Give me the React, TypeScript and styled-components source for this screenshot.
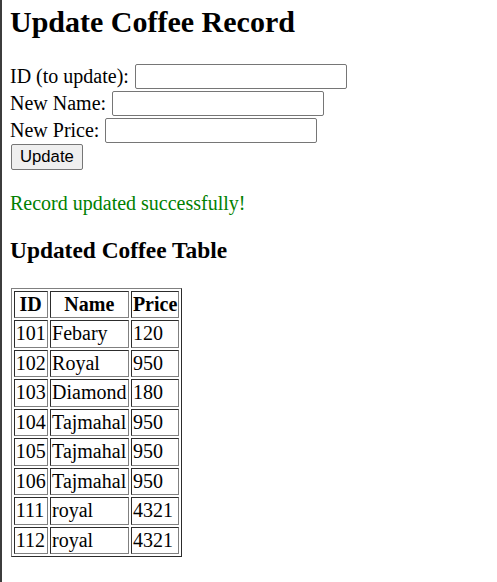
import React from "react";
import styled, { createGlobalStyle } from "styled-components";

const GlobalStyle = createGlobalStyle`
  html {
    background: #fff;
  }
  body {
    margin: 0;
    font-family: "Liberation Serif", "Times New Roman", serif;
    font-size: 20px;
    color: #000;
    border-left: 2px solid #3c3c3c;
    min-height: 582px;
    box-sizing: border-box;
  }
`;

const Page = styled.div`
  padding: 5px 8px 0;
`;

const Title = styled.h1`
  font-size: 30px;
  font-weight: bold;
  margin: 0 0 24.5px;
`;

const Form = styled.form`
  display: flex;
  flex-direction: column;
  align-items: flex-start;
`;

const FieldRow = styled.div`
  display: flex;
  align-items: center;
  gap: 6px;
  height: 26.7px;
`;

const Label = styled.label`
  line-height: 23px;
`;

const TextInput = styled.input`
  width: 212px;
  height: 25px;
  box-sizing: border-box;
  border: 1px solid #767676;
  border-radius: 2px;
  padding: 1px 2px;
  font-size: 16px;
  background: #fff;
`;

const Button = styled.button`
  height: 26px;
  padding: 1px 8.5px;
  margin-left: 0.5px;
  font-family: "Liberation Sans", Arial, sans-serif;
  font-size: 16.7px;
  color: #000;
  background: #efefef;
  border: 1px solid #767676;
  border-radius: 2px;
`;

const Message = styled.p`
  color: green;
  margin: 22px 0 0;
  line-height: 23px;
`;

const SubTitle = styled.h3`
  font-size: 23.4px;
  font-weight: bold;
  margin: 22px 0 0;
`;

const Table = styled.table`
  margin-top: 24px;
  margin-left: 0.5px;
  border: 1px outset #808080;
  border-spacing: 2px;
`;

const HeadCell = styled.th`
  border: 1px inset #808080;
  padding: 1px 1.2px;
  font-weight: bold;
  line-height: 23.5px;
`;

const Cell = styled.td`
  border: 1px inset #808080;
  padding: 1px 1.2px;
  line-height: 23.5px;
`;

const coffees = [
  { id: 101, name: "Febary", price: 120 },
  { id: 102, name: "Royal", price: 950 },
  { id: 103, name: "Diamond", price: 180 },
  { id: 104, name: "Tajmahal", price: 950 },
  { id: 105, name: "Tajmahal", price: 950 },
  { id: 106, name: "Tajmahal", price: 950 },
  { id: 111, name: "royal", price: 4321 },
  { id: 112, name: "royal", price: 4321 },
];

export default function App() {
  return (
    <>
      <GlobalStyle />
      <Page>
        <Title>Update Coffee Record</Title>
        <Form onSubmit={e => e.preventDefault()}>
          <FieldRow>
            <Label>ID (to update):</Label>
            <TextInput type="text" />
          </FieldRow>
          <FieldRow>
            <Label>New Name:</Label>
            <TextInput type="text" />
          </FieldRow>
          <FieldRow>
            <Label>New Price:</Label>
            <TextInput type="text" />
          </FieldRow>
          <Button type="submit">Update</Button>
        </Form>
        <Message>Record updated successfully!</Message>
        <SubTitle>Updated Coffee Table</SubTitle>
        <Table>
          <thead>
            <tr>
              <HeadCell>ID</HeadCell>
              <HeadCell>Name</HeadCell>
              <HeadCell>Price</HeadCell>
            </tr>
          </thead>
          <tbody>
            {coffees.map(c => (
              <tr key={c.id}>
                <Cell>{c.id}</Cell>
                <Cell>{c.name}</Cell>
                <Cell>{c.price}</Cell>
              </tr>
            ))}
          </tbody>
        </Table>
      </Page>
    </>
  );
}
